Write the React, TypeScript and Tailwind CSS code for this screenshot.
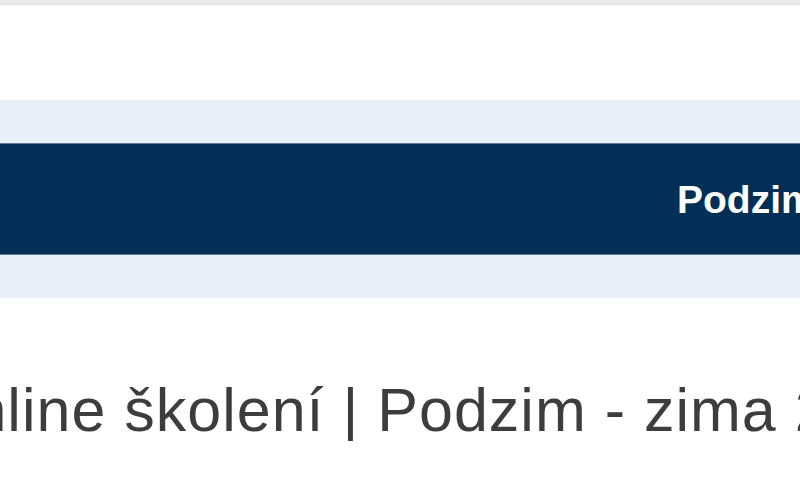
export default function App() {
  return (
    <div className="w-[800px] h-[500px] overflow-hidden bg-white font-['Liberation_Sans',Arial,sans-serif]">
      {/* browser strip */}
      <div className="h-[6px] bg-[#e8e8e8] border-b border-[#f2f2f2]" />
      <div className="h-[94px]" />

      {/* banner */}
      <div className="bg-[#e8eff8] py-[43px]">
        <div className="h-[112px] bg-[#012f55] border-y border-[#5f7b98] flex items-center">
          <span className="ml-[677px] text-[39px] font-bold text-white whitespace-nowrap leading-none pt-[1px]">
            Podzim - zima 2025
          </span>
        </div>
      </div>

      {/* heading */}
      <div className="overflow-hidden mt-[82px]">
        <h1 className="-ml-[76px] text-[61px] tracking-[1px] leading-none text-[#3d3d3f] whitespace-nowrap">
          Online školení | Podzim - zima 2025
        </h1>
      </div>
    </div>
  );
}
